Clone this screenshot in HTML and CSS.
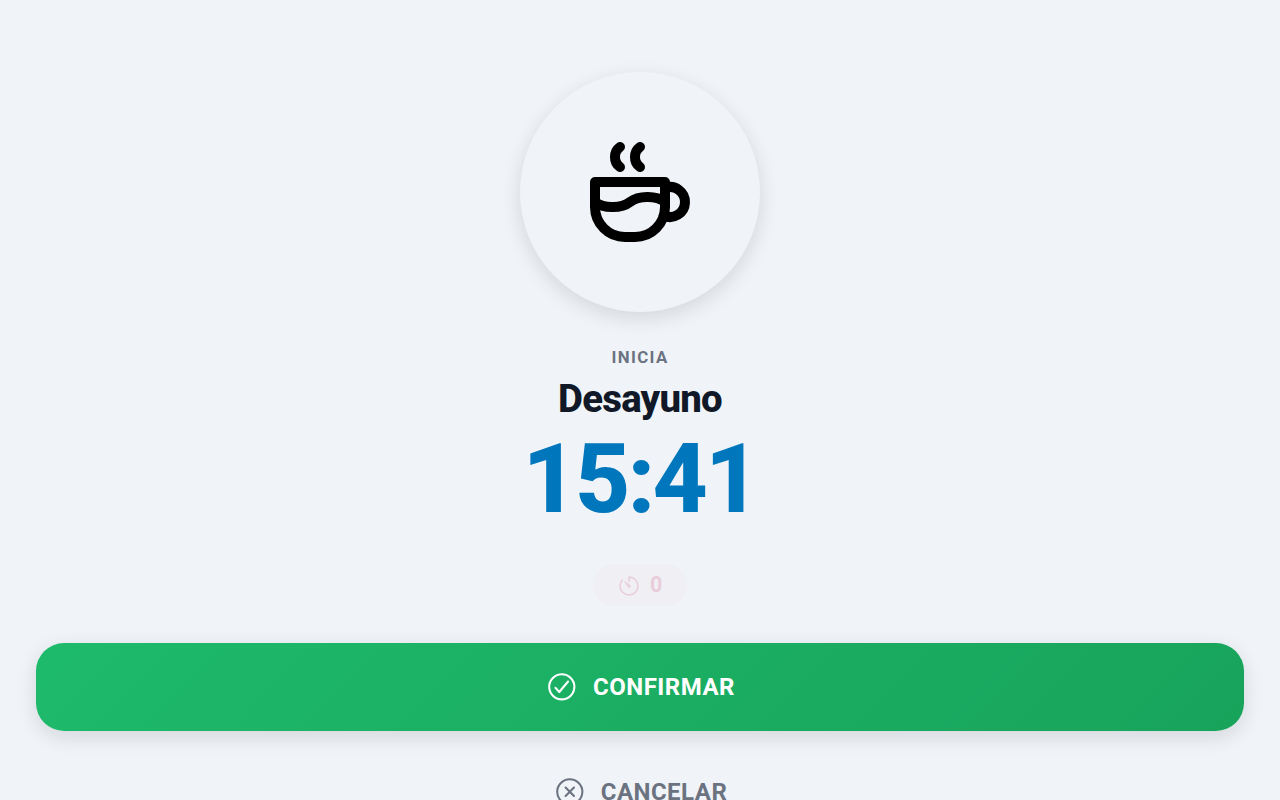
FILE: index.html
```html
<!DOCTYPE html>
<html lang="es">
<head>
<meta charset="utf-8">
<title>Desayuno</title>
<link rel="stylesheet" href="styles.css">
</head>
<body>
<main class="screen">
  <div class="badge">
    <svg class="badge-icon" viewBox="0 0 24 24">
      <path d="M3 14c.83 .642 2.077 1.017 3.5 1c1.423 .017 2.67 -.358 3.5 -1c.83 -.642 2.077 -1.017 3.5 -1c1.423 -.017 2.67 .358 3.5 1"/>
      <path d="M8 3a2.4 2.4 0 0 0 -1 2a2.4 2.4 0 0 0 1 2"/>
      <path d="M12 3a2.4 2.4 0 0 0 -1 2a2.4 2.4 0 0 0 1 2"/>
      <path d="M3 10h14v5a6 6 0 0 1 -6 6h-2a6 6 0 0 1 -6 -6v-5z"/>
      <path d="M16.746 16.726a3 3 0 1 0 .252 -5.555"/>
    </svg>
  </div>
  <div class="label">INICIA</div>
  <h1 class="title">Desayuno</h1>
  <div class="time">15:41</div>
  <div class="counter">
    <svg class="icon icon-timer" viewBox="0 0 512 512">
      <path d="M112.91 128A191.85 191.85 0 0064 254c-1.18 106.35 85.65 193.8 192 194 106.2.2 192-85.83 192-192 0-104.54-83.55-189.61-187.5-192a4.36 4.36 0 00-4.5 4.37V152"/>
      <path class="hand" d="M233.38 278.63l-79-113a8.13 8.13 0 0111.32-11.32l113 79a32.5 32.5 0 01-37.25 53.26 33.21 33.21 0 01-8.07-7.94z"/>
    </svg>
    <span class="count">0</span>
  </div>
  <button class="button confirm">
    <svg class="icon" viewBox="0 0 512 512">
      <circle cx="256" cy="256" r="192"/>
      <path d="M352 176L217.6 336 160 272"/>
    </svg>
    <span>CONFIRMAR</span>
  </button>
  <button class="button cancel">
    <svg class="icon" viewBox="0 0 512 512">
      <circle cx="256" cy="256" r="192"/>
      <path d="M320 320L192 192M192 320l128-128"/>
    </svg>
    <span>CANCELAR</span>
  </button>
</main>
</body>
</html>
```
FILE: styles.css
```css
* { box-sizing: border-box; }
body {
  margin: 0;
  height: 100vh;
  overflow: hidden;
  background: #f0f4f8;
  font-family: Roboto, sans-serif;
  font-weight: 700;
}
.screen {
  display: flex;
  flex-direction: column;
  align-items: center;
  padding: 72px 36px 0;
}
.badge {
  display: grid;
  place-items: center;
  width: 240px;
  height: 240px;
  border-radius: 50%;
  background: #f0f4f8;
  box-shadow: 0 6px 20px rgba(0, 0, 0, .12);
}
.badge-icon {
  width: 120px;
  height: 120px;
  fill: none;
  stroke: #000;
  stroke-width: 2;
  stroke-linecap: round;
  stroke-linejoin: round;
}
.label {
  margin-top: 35px;
  font-size: 16.8px;
  line-height: 20px;
  letter-spacing: .08em;
  color: #6b7280;
}
.title {
  margin: 8px 0 0;
  font-size: 38.4px;
  font-weight: 800;
  line-height: 48px;
  letter-spacing: -.02em;
  color: #111827;
}
.time {
  margin-top: 8px;
  font-size: 96px;
  font-weight: 800;
  line-height: 97px;
  letter-spacing: -.03em;
  color: #0076bd;
}
.counter {
  display: flex;
  align-items: center;
  justify-content: center;
  gap: 9.6px;
  width: 94px;
  height: 42px;
  margin-top: 36px;
  border-radius: 21px;
  background: #f0eff4;
  color: #e9cddb;
  font-size: 21.6px;
}
.icon {
  width: 33.6px;
  height: 33.6px;
  fill: none;
  stroke: currentColor;
  stroke-width: 32;
  stroke-linecap: round;
  stroke-linejoin: round;
}
.icon-timer { width: 24px; height: 24px; margin-top: 1px; }
.count { padding: 0 1px 2px 0; }
.hand { fill: currentColor; stroke: none; }
.button {
  display: flex;
  align-items: center;
  justify-content: center;
  gap: 14.4px;
  width: 100%;
  height: 88px;
  padding: 0;
  border: 0;
  border-radius: 28px;
  font: inherit;
  font-size: 24px;
  letter-spacing: .02em;
}
.confirm {
  margin-top: 37px;
  background: linear-gradient(135deg, #1eba6b, #18a35b);
  box-shadow: 0 6px 20px rgba(0, 0, 0, .12);
  color: #fff;
}
.cancel {
  margin-top: 17px;
  background: transparent;
  color: #6b7280;
}
```
